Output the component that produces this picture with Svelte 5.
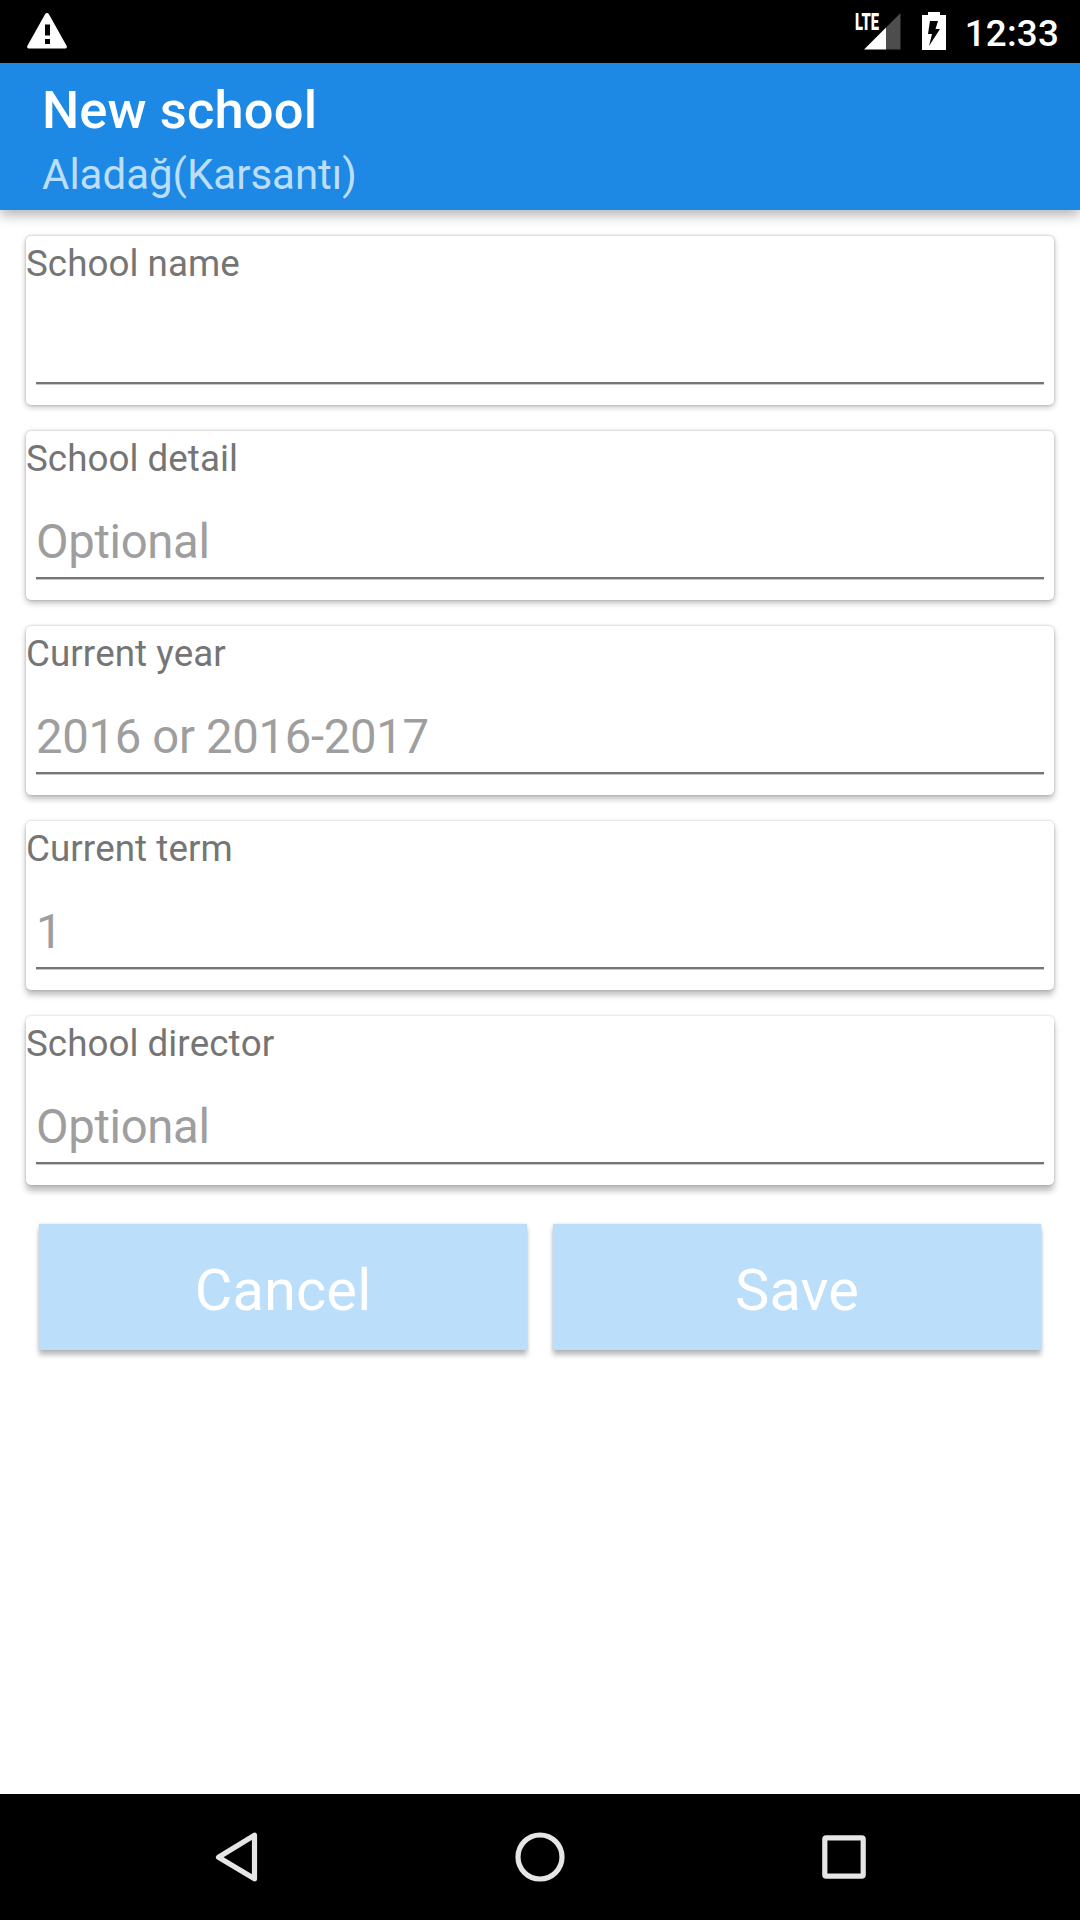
<script lang="ts">
	interface Field {
		id: string;
		label: string;
		hint: string;
	}

	const fields: Field[] = [
		{ id: 'name', label: 'School name', hint: '' },
		{ id: 'detail', label: 'School detail', hint: 'Optional' },
		{ id: 'year', label: 'Current year', hint: '2016 or 2016-2017' },
		{ id: 'term', label: 'Current term', hint: '1' },
		{ id: 'director', label: 'School director', hint: 'Optional' }
	];

	let values: Record<string, string> = $state({
		name: '',
		detail: '',
		year: '',
		term: '',
		director: ''
	});
</script>

<div class="screen">
	<div class="status-bar">
		<svg class="warning" width="40" height="36" viewBox="0 0 40 36">
			<path
				fill="#fff"
				fill-rule="evenodd"
				d="M18.2 1Q20-1 21.8 1L39.7 33Q40.3 35.5 38.5 35.5H1.5Q-.3 35.5.3 33ZM18 11.5V22.5H23V11.5ZM18 26V31H23V26Z"
			/>
		</svg>
		<div class="indicators">
			<svg class="signal" width="50" height="44" viewBox="-4 -4 50 44">
				<path fill="#4d4d4d" d="M45.5 2V38.5H31V16.5Z" />
				<path fill="#fff" d="M31 16.5V38.5H9Z" />
				<text x="0" y="18.5" textLength="24" lengthAdjust="spacingAndGlyphs">LTE</text>
			</svg>
			<svg class="battery" width="24" height="38" viewBox="0 0 24 38">
				<path fill="#fff" d="M6 0H18V3H24V38H0V3H6Z" />
				<path fill="#000" d="M8 9H16L13.5 17H18L7 34L10 22H6Z" />
			</svg>
			<span class="time">12:33</span>
		</div>
	</div>

	<header class="app-bar">
		<h1>New school</h1>
		<p>Aladağ(Karsantı)</p>
	</header>

	<main>
		{#each fields as field, i (field.id)}
			<div class="card" style="--drop: {2 + i * 0.8}px">
				<label for={field.id}>{field.label}</label>
				<input id={field.id} type="text" placeholder={field.hint} bind:value={values[field.id]} />
			</div>
		{/each}

		<div class="actions">
			<button type="button">Cancel</button>
			<button type="button">Save</button>
		</div>
	</main>

	<nav class="nav-bar">
		<svg width="50" height="50" viewBox="0 0 50 50">
			<path d="M43.5 3.2V46.8L7.5 25.3Z" />
		</svg>
		<svg width="50" height="50" viewBox="0 0 50 50">
			<circle cx="25" cy="25" r="22" />
		</svg>
		<svg width="50" height="50" viewBox="0 0 50 50">
			<rect x="5.8" y="5.8" width="38.4" height="38.4" rx="1.5" />
		</svg>
	</nav>
</div>

<style>
	:global(body) {
		margin: 0;
		background: #fff;
	}

	.screen {
		display: flex;
		flex-direction: column;
		height: 1920px;
		font-family: Roboto, sans-serif;
		background: #fff;
	}

	.status-bar {
		display: flex;
		justify-content: space-between;
		box-sizing: border-box;
		height: 63px;
		padding: 0 21px 0 27px;
		background: #000;
	}

	.warning {
		margin-top: 13px;
	}

	.indicators {
		display: flex;
	}

	.signal {
		margin-top: 7px;
		overflow: visible;
	}

	.signal text {
		font-size: 23px;
		font-weight: 900;
		fill: #fff;
	}

	.battery {
		margin: 12px 19px 0 21px;
	}

	.time {
		padding-top: 2px;
		font-size: 36.75px;
		font-weight: 500;
		line-height: 63px;
		letter-spacing: 0.2px;
		color: #fff;
	}

	.app-bar {
		box-sizing: border-box;
		height: 147px;
		padding: 16px 42px 0;
		background: #1e88e5;
		box-shadow: 0 5px 12px rgba(0, 0, 0, 0.3);
	}

	h1 {
		margin: 0;
		font-size: 52.5px;
		font-weight: 500;
		line-height: 62px;
		letter-spacing: 0.12px;
		color: #fff;
	}

	p {
		margin: 0;
		font-size: 42px;
		line-height: 68px;
		color: #bbdefb;
	}

	main {
		display: flex;
		flex: 1;
		flex-direction: column;
		gap: 26px;
		padding: 26px;
	}

	.card {
		display: flex;
		flex-direction: column;
		box-sizing: border-box;
		height: 169px;
		background: #fff;
		border-radius: 5px;
		box-shadow:
			0 0 3px rgba(0, 0, 0, 0.2),
			0 var(--drop) 6px rgba(0, 0, 0, 0.26);
	}

	label {
		font-size: 36.75px;
		font-kerning: none;
		line-height: 55px;
		letter-spacing: 0.04px;
		color: #757575;
	}

	input {
		box-sizing: border-box;
		height: 93px;
		margin: 0 10px;
		padding: 28px 0 8px;
		border: 0;
		border-bottom: 2px solid #757575;
		box-shadow: 0 1px #c8c8c8;
		outline: none;
		font: 47.25px/55px Roboto, sans-serif;
		letter-spacing: -0.32px;
		color: #212121;
		background: none;
	}

	input::placeholder {
		color: #9e9e9e;
		opacity: 1;
	}

	.actions {
		display: flex;
		gap: 26px;
		padding: 13px;
	}

	button {
		flex: 1;
		height: 126px;
		padding: 6px 0 0;
		border: 0;
		border-radius: 0;
		font: 57.75px Roboto, sans-serif;
		letter-spacing: 0.15px;
		color: #fff;
		background: #bbdefb;
		box-shadow:
			0 0 3px rgba(0, 0, 0, 0.12),
			0 5px 5px rgba(0, 0, 0, 0.26);
	}

	.nav-bar {
		display: flex;
		justify-content: center;
		align-items: center;
		gap: 254px;
		height: 126px;
		background: #000;
	}

	.nav-bar svg {
		fill: none;
		stroke: #e6e6e6;
		stroke-width: 5.2;
		stroke-linejoin: round;
	}
</style>
